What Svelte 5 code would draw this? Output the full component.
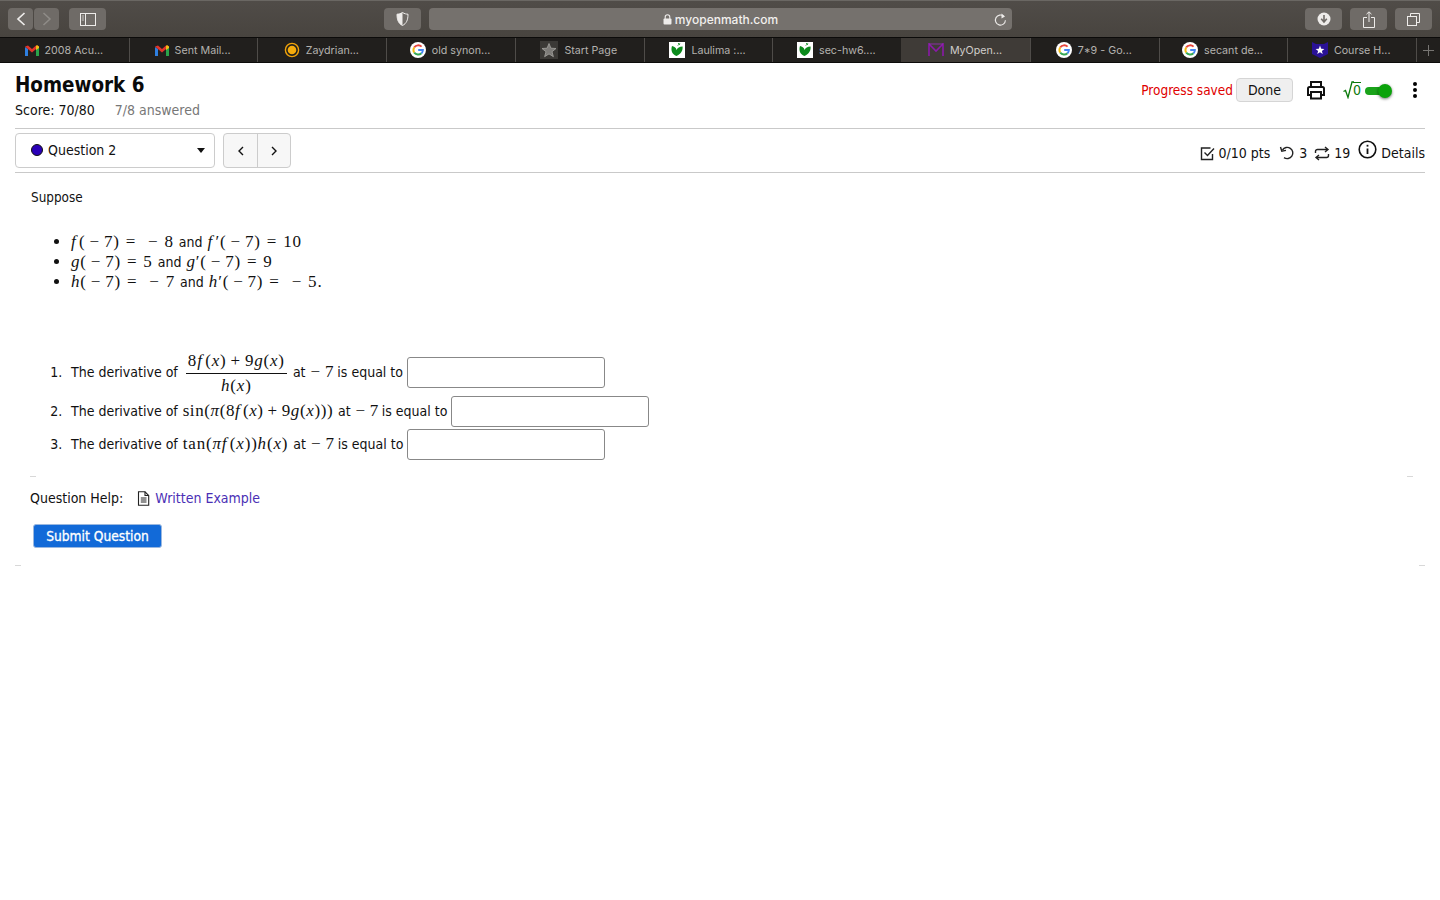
<script>
  const tabs = [
    { label: '2008 Acu...', icon: 'gmail' },
    { label: 'Sent Mail...', icon: 'gmail' },
    { label: 'Zaydrian...', icon: 'ring' },
    { label: 'old synon...', icon: 'google' },
    { label: 'Start Page', icon: 'star' },
    { label: 'Laulima :...', icon: 'leaf' },
    { label: 'sec-hw6....', icon: 'leaf' },
    { label: 'MyOpen...', icon: 'mom', active: true },
    { label: '7*9 - Go...', icon: 'google' },
    { label: 'secant de...', icon: 'google' },
    { label: 'Course H...', icon: 'shield' }
  ];
</script>

<div class="toolbar">
  <div class="group">
    <div class="tool-pair">
      <button class="tool nav" aria-label="Back">
        <svg width="12" height="16" viewBox="0 0 12 16"><path d="M9.5 2 L3 8 L9.5 14" fill="none" stroke="#eeecea" stroke-width="1.7"/></svg>
      </button>
      <button class="tool nav" aria-label="Forward">
        <svg width="12" height="16" viewBox="0 0 12 16"><path d="M2.5 2 L9 8 L2.5 14" fill="none" stroke="#8f8c88" stroke-width="1.5"/></svg>
      </button>
    </div>
    <button class="tool wide" aria-label="Sidebar">
      <svg width="16" height="13" viewBox="0 0 16 13"><rect x="0.5" y="0.5" width="15" height="12" fill="none" stroke="#eeecea"/><path d="M5.5 0.5 V12.5" stroke="#eeecea"/><path d="M1.8 3 H4 M1.8 5 H4 M1.8 7 H4" stroke="#c8c6c3"/></svg>
    </button>
  </div>

  <div class="center">
    <button class="tool shield-btn" aria-label="Privacy">
      <svg width="13" height="14" viewBox="0 0 13 14"><path d="M6.5 0.5 C8.5 1.8 10.5 2.2 12 2.2 C12 8 10.5 11.5 6.5 13.5 C2.5 11.5 1 8 1 2.2 C2.5 2.2 4.5 1.8 6.5 0.5 Z" fill="none" stroke="#eeecea"/><path d="M6.5 0.5 C4.5 1.8 2.5 2.2 1 2.2 C1 8 2.5 11.5 6.5 13.5 Z" fill="#eeecea"/></svg>
    </button>
    <div class="address">
      <span class="url">
        <svg width="9" height="11" viewBox="0 0 9 11"><rect x="0.5" y="4.5" width="8" height="6" rx="1" fill="#eeecea"/><path d="M2.2 5 V3 a2.3 2.3 0 0 1 4.6 0 V5" fill="none" stroke="#eeecea" stroke-width="1.1"/></svg>
        myopenmath.com
      </span>
      <svg class="reload" width="13" height="14" viewBox="0 0 13 14"><path d="M9.8 3.4 A5 5 0 1 0 11.4 7.2" fill="none" stroke="#eeecea" stroke-width="1.1"/><path d="M7.5 0.5 L11 3.4 L7.5 5.6 Z" fill="#eeecea"/></svg>
    </div>
  </div>

  <div class="group">
    <button class="tool wide" aria-label="Downloads">
      <svg width="14" height="14" viewBox="0 0 14 14"><circle cx="7" cy="7" r="6.5" fill="#eeecea"/><path d="M7 3 V9 M4.2 6.8 L7 10 L9.8 6.8" fill="none" stroke="#6f6b67" stroke-width="1.6"/></svg>
    </button>
    <button class="tool wide" aria-label="Share">
      <svg width="12" height="17" viewBox="0 0 12 17"><path d="M4 6.5 H0.5 V16.5 H11.5 V6.5 H8" fill="none" stroke="#eeecea"/><path d="M6 11 V1 M3.5 3.2 L6 0.8 L8.5 3.2" fill="none" stroke="#eeecea"/></svg>
    </button>
    <button class="tool wide" aria-label="Tabs">
      <svg width="13" height="13" viewBox="0 0 13 13"><rect x="0.5" y="3.5" width="9" height="9" fill="none" stroke="#eeecea"/><path d="M3.5 3.5 V0.5 H12.5 V9.5 H9.5" fill="none" stroke="#eeecea"/></svg>
    </button>
  </div>
</div>

<div class="tabbar">
  {#each tabs as tab}
    <div class="tab" class:active={tab.active}>
      {#if tab.icon === 'gmail'}
        <svg width="14" height="11" viewBox="0 0 14 11"><path d="M0 2 V11 H3 V4 Z" fill="#2f7fe0"/><path d="M11 4 V11 H14 V2 Z" fill="#2aa44a"/><path d="M0 1.5 L3 0.5 L7 4 L11 0.5 L14 1.5 L7 7.5 Z" fill="#e0352b"/><path d="M12 0 L14 1.5 V3 L11 5 V1 Z" fill="#f5bc15"/></svg>
      {:else if tab.icon === 'ring'}
        <svg width="16" height="16" viewBox="0 0 16 16"><circle cx="8" cy="8" r="6.6" fill="none" stroke="#f0a30a" stroke-width="1.4"/><circle cx="8" cy="8" r="4.3" fill="#f5ab0c"/></svg>
      {:else if tab.icon === 'google'}
        <svg width="16" height="16" viewBox="0 0 16 16"><circle cx="8" cy="8" r="8" fill="#fff"/><path d="M11.6 4.6 A5 5 0 0 0 4.2 5.4" fill="none" stroke="#e8453c" stroke-width="1.9"/><path d="M4.2 5.4 A5 5 0 0 0 4.2 10.6" fill="none" stroke="#f5bb12" stroke-width="1.9"/><path d="M4.2 10.6 A5 5 0 0 0 11.5 11.3" fill="none" stroke="#34a853" stroke-width="1.9"/><path d="M11.5 11.3 A5 5 0 0 0 12.9 8 H8.2" fill="none" stroke="#4285f4" stroke-width="1.9"/></svg>
      {:else if tab.icon === 'star'}
        <span class="star-box">
          <svg width="16" height="16" viewBox="0 0 16 16"><path d="M8 1.5 L9.9 6.2 L15 6.5 L11 9.7 L12.4 14.7 L8 11.9 L3.6 14.7 L5 9.7 L1 6.5 L6.1 6.2 Z" fill="#7d7b78" stroke="#a5a3a0" stroke-width="0.8"/></svg>
        </span>
      {:else if tab.icon === 'leaf'}
        <svg width="16" height="16" viewBox="0 0 16 16"><rect width="16" height="16" fill="#fff"/><path d="M7.4 14 C3 12.5 1.6 8 3 4 C5 4.4 7 5.4 7.6 8 C8.4 5.6 10.5 4.4 13.6 4.4 C14 8.4 12 12 7.4 14 Z" fill="#0c8a1c"/><path d="M9 1 L11 3 M11 1.2 L8.8 3.6" stroke="#3aa04a"/></svg>
      {:else if tab.icon === 'mom'}
        <svg width="16" height="14" viewBox="0 0 16 14"><path d="M1 13 V1 L8 8 L15 1 V13" fill="none" stroke="#8a1aa8" stroke-width="1.6"/><path d="M1 1 H15" stroke="#a02cc4" stroke-width="0.8"/></svg>
      {:else if tab.icon === 'shield'}
        <svg width="16" height="16" viewBox="0 0 16 16"><path d="M0 0 L4 2 H12 L16 0 V12 L8 16 L0 12 Z" fill="#2a1296"/><path d="M8 3.6 L9.2 6.8 L12.4 6.9 L9.9 9 L10.7 12.1 L8 10.3 L5.3 12.1 L6.1 9 L3.6 6.9 L6.8 6.8 Z" fill="#fff"/></svg>
      {/if}
      <span>{tab.label}</span>
    </div>
  {/each}
  <div class="new-tab">
    <svg width="11" height="11" viewBox="0 0 11 11"><path d="M5.5 0 V11 M0 5.5 H11" stroke="#777572"/></svg>
  </div>
</div>

<main class="page">
  <header class="head">
    <div>
      <h1>Homework 6</h1>
      <p class="score">Score: 70/80 <span class="answered">7/8 answered</span></p>
    </div>
    <div class="head-actions">
      <span class="saved">Progress saved</span>
      <button class="done">Done</button>
      <svg class="print" width="20" height="20" viewBox="0 0 20 20" fill="none" stroke="#111" stroke-width="2"><path d="M5 7 V2 H15 V7"/><path d="M5 15 H2 V8.5 A1.5 1.5 0 0 1 3.5 7 H16.5 A1.5 1.5 0 0 1 18 8.5 V15 H15"/><rect x="5" y="12" width="10" height="6.5"/></svg>
      <span class="mathtoggle">
        <span class="sqrt"><svg width="11" height="18" viewBox="0 0 11 18"><path d="M0.5 10.5 L2.5 9.5 L5 16.5 L9 1 H11" fill="none" stroke="#0b7a0b" stroke-width="1.3"/></svg><span>0</span></span>
        <span class="switch"><span class="knob"></span></span>
      </span>
      <svg class="kebab" width="4" height="16" viewBox="0 0 4 16"><circle cx="2" cy="2" r="2"/><circle cx="2" cy="8" r="2"/><circle cx="2" cy="14" r="2"/></svg>
    </div>
  </header>

  <div class="controls">
    <div class="left-controls">
      <div class="select">
        <span class="dot"></span>
        <span class="select-label">Question 2</span>
        <span class="caret"></span>
      </div>
      <div class="pager">
        <button aria-label="Previous"><svg width="8" height="10" viewBox="0 0 8 10"><path d="M6 1 L2 5 L6 9" fill="none" stroke="#111" stroke-width="1.4"/></svg></button>
        <button aria-label="Next"><svg width="8" height="10" viewBox="0 0 8 10"><path d="M2 1 L6 5 L2 9" fill="none" stroke="#111" stroke-width="1.4"/></svg></button>
      </div>
    </div>
    <div class="meta">
      <span class="meta-item pts">
        <svg width="15" height="15" viewBox="0 0 15 15" fill="none" stroke="#222" stroke-width="1.4"><path d="M12.5 8 V13.5 H1.5 V2 H10.5"/><path d="M4.5 6.5 L7.5 9.5 L14 2.5"/></svg>
        0/10 pts
      </span>
      <span class="meta-item">
        <svg width="16" height="14" viewBox="0 0 16 14" fill="none" stroke="#222" stroke-width="1.4"><path d="M3.5 4 A5.6 5.6 0 1 1 5 11.6"/><path d="M1.5 1 L2.8 5.2 L7 4.4"/></svg>
        3
      </span>
      <span class="meta-item">
        <svg width="16" height="15" viewBox="0 0 16 15" fill="none" stroke="#222" stroke-width="1.4"><path d="M1.5 7 V5.5 A2 2 0 0 1 3.5 3.5 H14 M11 1 L14 3.5 L11 6"/><path d="M14.5 8 V9.5 A2 2 0 0 1 12.5 11.5 H2 M5 9 L2 11.5 L5 14"/></svg>
        19
      </span>
      <span class="meta-item details">
        <svg class="info" width="19" height="19" viewBox="0 0 19 19" fill="none" stroke="#111" stroke-width="1.6"><circle cx="9.5" cy="9.5" r="8.3"/><path d="M9.5 8.5 V14" stroke-width="1.8"/><path d="M9.5 4.8 V6.6" stroke-width="1.8"/></svg>
        Details
      </span>
    </div>
  </div>

  <section class="question">
    <p class="suppose">Suppose</p>
    <ul class="facts">
      <li><i class="f">f</i>(<span class="n">−</span>7)<span class="eq">=</span><span class="neg">−</span>8 <span class="t">and</span> <i class="f">f</i>′(<span class="n">−</span>7)<span class="eq">=</span>10</li>
      <li><i>g</i>(<span class="n">−</span>7)<span class="eq">=</span>5 <span class="t">and</span> <i>g</i>′(<span class="n">−</span>7)<span class="eq">=</span>9</li>
      <li><i>h</i>(<span class="n">−</span>7)<span class="eq">=</span><span class="neg">−</span>7 <span class="t">and</span> <i>h</i>′(<span class="n">−</span>7)<span class="eq">=</span><span class="neg">−</span>5.</li>
    </ul>

    <ol class="parts">
      <li class="part-one">
        <span class="t">The derivative of</span>
        <span class="frac">
          <span class="num">8<i class="f">f</i>(<i>x</i>)<span class="plus">+</span>9<i>g</i>(<i>x</i>)</span>
          <span class="den"><i>h</i>(<i>x</i>)</span>
        </span>
        <span class="t">at</span> <span class="un">−</span>7 <span class="t is">is equal to</span>
        <input type="text" />
      </li>
      <li class="part-two">
        <span class="t">The derivative of</span> sin(<i>π</i>(8<i class="f">f</i>(<i>x</i>)<span class="plus">+</span>9<i>g</i>(<i>x</i>))) <span class="t">at</span> <span class="un">−</span>7 <span class="t is">is equal to</span>
        <input type="text" />
      </li>
      <li class="part-three">
        <span class="t">The derivative of</span> tan(<i>π</i><i class="f">f</i>(<i>x</i>))<i>h</i>(<i>x</i>) <span class="t">at</span> <span class="un">−</span>7 <span class="t is">is equal to</span>
        <input type="text" />
      </li>
    </ol>

    <div class="corners"><span></span><span></span></div>

    <div class="help">
      <span>Question Help:</span>
      <svg width="13" height="15" viewBox="0 0 13 15" fill="none" stroke="#222" stroke-width="1.1"><path d="M1.5 0.8 H8 L11.7 4.5 V14.2 H1.5 Z"/><path d="M8 0.8 V4.5 H11.7"/><path d="M3.8 7 H9.5 M3.8 9 H9.5 M3.8 11 H9.5"/></svg>
      <a href="#example">Written Example</a>
    </div>

    <button class="submit">Submit Question</button>
  </section>

  <div class="corners outer"><span></span><span></span></div>
</main>

<style>
  :global(body) {
    margin: 0;
    background: #fff;
    font-family: "DejaVu Sans Condensed", "DejaVu Sans", sans-serif;
    font-stretch: condensed;
    color: #111;
  }

  button {
    font-family: inherit;
    padding: 0;
    cursor: pointer;
  }

  /* Browser chrome */
  .toolbar {
    height: 38px;
    box-sizing: border-box;
    padding: 0 8px;
    display: flex;
    align-items: center;
    justify-content: space-between;
    position: relative;
    background: linear-gradient(#504c48, #48443f);
    border-top: 1px solid #6a6763;
    border-bottom: 1px solid #0c0b0a;
  }

  .group {
    display: flex;
    gap: 8px;
  }

  .tool-pair {
    display: flex;
    gap: 1px;
    margin-right: 2px;
  }

  .tool {
    height: 22px;
    border: 0;
    border-radius: 4px;
    background: #6f6b67;
    display: flex;
    align-items: center;
    justify-content: center;
  }

  .nav { width: 25px; }
  .wide { width: 37px; }

  .center {
    position: absolute;
    left: 384px;
    top: 7px;
    display: flex;
    gap: 8px;
  }

  .shield-btn { width: 37px; }

  .address {
    width: 583px;
    height: 22px;
    border-radius: 4px;
    background: #75716d;
    display: flex;
    align-items: center;
    justify-content: center;
    position: relative;
  }

  .url {
    font-family: Inter, "Liberation Sans", sans-serif;
    font-stretch: normal;
    font-size: 12px;
    font-weight: 500;
    color: #f2f0ee;
    display: flex;
    align-items: center;
    gap: 3px;
  }

  .reload {
    position: absolute;
    right: 5px;
    top: 5px;
  }

  .tabbar {
    height: 25px;
    display: flex;
    background: #211f1d;
    border-bottom: 1px solid #0c0b0a;
    box-sizing: border-box;
  }

  .tab {
    flex: 1 1 0;
    min-width: 0;
    box-sizing: border-box;
    padding-right: 2px;
    display: flex;
    align-items: center;
    justify-content: center;
    gap: 6px;
    border-left: 1px solid #4f4c49;
    font-family: Inter, "Liberation Sans", sans-serif;
    font-stretch: normal;
    font-size: 10.7px;
    color: #b4b2af;
  }

  .tab:first-child {
    border-left-color: transparent;
  }

  .tab.active {
    background: #3f3b37;
    color: #cfcdca;
    border-left-color: #3f3b37;
  }

  .star-box {
    width: 18px;
    height: 18px;
    background: #3b3936;
    display: flex;
    align-items: center;
    justify-content: center;
  }

  .new-tab {
    width: 24px;
    box-sizing: border-box;
    flex-shrink: 0;
    display: flex;
    align-items: center;
    justify-content: center;
    border-left: 1px solid #4f4c49;
  }

  /* Page */
  .page {
    padding: 0 15px;
  }

  .head {
    display: flex;
    justify-content: space-between;
    align-items: flex-start;
    height: 66px;
    box-sizing: border-box;
    border-bottom: 1px solid #c9c9c9;
  }

  h1 {
    margin: 9px 0 0;
    font-size: 20.4px;
    line-height: 26px;
    font-weight: 700;
    color: #0a0a0a;
  }

  .score {
    margin: 3px 0 0;
    font-size: 14px;
    line-height: 18px;
  }

  .answered {
    color: #777;
    margin-left: 16px;
  }

  .head-actions {
    display: flex;
    align-items: center;
    margin-top: 14px;
    height: 25px;
  }

  .saved {
    color: #e00000;
    font-size: 13.5px;
    margin-right: 3px;
  }

  .done {
    width: 57px;
    height: 24px;
    border: 1px solid #d5d5d5;
    border-radius: 4px;
    background: #efefef;
    font-size: 14px;
    color: #111;
  }

  .print {
    margin-left: 13px;
  }

  .mathtoggle {
    display: flex;
    align-items: center;
    margin-left: 17px;
  }

  .sqrt {
    display: flex;
    align-items: center;
    color: #0b7a0b;
    font-size: 14px;
  }

  .sqrt span {
    border-top: 1px solid #0b7a0b;
    line-height: 15px;
    margin-left: -1px;
  }

  .switch {
    width: 26px;
    height: 8px;
    margin: 3px 0 0 4px;
    border-radius: 4px;
    background: #1aa31a;
    position: relative;
  }

  .knob {
    position: absolute;
    right: -1px;
    top: -3px;
    width: 14px;
    height: 14px;
    border-radius: 50%;
    background: #0ba30b;
    box-shadow: 0 1px 3px rgba(0, 0, 0, 0.55);
  }

  .kebab {
    margin-left: 22px;
    margin-right: 8px;
  }

  .controls {
    height: 44px;
    box-sizing: border-box;
    border-bottom: 1px solid #c9c9c9;
    display: flex;
    justify-content: space-between;
    padding-top: 4px;
  }

  .left-controls {
    display: flex;
    gap: 8px;
  }

  .select {
    width: 200px;
    height: 35px;
    box-sizing: border-box;
    border: 1px solid #ccc;
    border-radius: 4px;
    display: flex;
    align-items: center;
    padding: 0 9px 1px 15px;
    font-size: 14px;
  }

  .dot {
    width: 12px;
    height: 12px;
    border-radius: 50%;
    background: #2a00b8;
    border: 1px solid #111;
    box-sizing: border-box;
    margin-right: 5px;
  }

  .select-label {
    flex: 1;
  }

  .caret {
    width: 0;
    height: 0;
    border: 4px solid transparent;
    border-top: 5px solid #111;
    border-bottom: 0;
  }

  .pager {
    display: flex;
    height: 35px;
    box-sizing: border-box;
    border: 1px solid #ccc;
    border-radius: 4px;
    background: #f7f7f7;
    overflow: hidden;
  }

  .pager button {
    width: 33px;
    border: 0;
    background: transparent;
    display: flex;
    align-items: center;
    justify-content: center;
  }

  .pager button + button {
    border-left: 1px solid #ccc;
  }

  .meta {
    display: flex;
    align-items: flex-start;
    gap: 7px;
    font-size: 14px;
    padding-top: 11px;
  }

  .meta-item {
    display: flex;
    align-items: center;
    gap: 4px;
    height: 18px;
  }

  .pts {
    margin-right: 2px;
  }

  .details {
    margin-left: 1px;
  }

  .info {
    margin-top: -7px;
  }

  /* Question */
  .question {
    padding-top: 1px;
    font-family: "Liberation Serif", "Times New Roman", serif;
    font-stretch: normal;
    font-size: 17px;
    letter-spacing: 0.8px;
  }

  .t, .suppose, .help, .submit {
    font-family: "DejaVu Sans Condensed", "DejaVu Sans", sans-serif;
    font-stretch: condensed;
    font-size: 14px;
    letter-spacing: 0;
  }

  .f {
    padding-right: 2.5px;
  }

  .n {
    margin: 0 4px;
  }

  .eq {
    margin: 0 6px;
  }

  .neg {
    margin: 0 6px;
  }

  .un {
    margin-right: 4px;
  }

  .is {
    margin-left: -2px;
  }

  .plus {
    margin: 0 4px;
  }

  .suppose {
    margin: 14px 0 0 16px;
    line-height: 20px;
    font-size: 13.4px;
  }

  .facts {
    margin: 24px 0 0;
    padding: 0 0 0 56px;
    line-height: 20px;
  }

  .parts {
    margin: 59px 0 0;
    padding: 0 0 0 56px;
  }

  .parts li::marker {
    content: counter(list-item) ".\2002\2009";
    font-family: "DejaVu Sans Condensed", "DejaVu Sans", sans-serif;
    font-size: 14px;
    letter-spacing: 0;
  }

  .parts li {
    white-space: nowrap;
    line-height: 31px;
  }

  .part-one { height: 44px; }
  .part-two { height: 33px; letter-spacing: 0.6px; }
  .part-three { height: 31px; }

  .frac {
    display: inline-flex;
    flex-direction: column;
    align-items: center;
    vertical-align: middle;
    margin: 0 1px 0 3px;
    line-height: 20px;
  }

  .num {
    padding: 0 2px 2px;
    border-bottom: 1px solid #111;
  }

  .den {
    padding-top: 2px;
  }

  input {
    width: 198px;
    height: 31px;
    box-sizing: border-box;
    border: 1px solid #888;
    border-radius: 3px;
    background: #fff;
    vertical-align: baseline;
    margin-left: -1px;
    padding: 0;
  }

  .corners {
    display: flex;
    justify-content: space-between;
    padding: 0 12px 0 15px;
    margin-top: 17px;
    height: 1px;
  }

  .corners span {
    width: 6px;
    height: 1px;
    background: #d8d8d8;
  }

  .corners.outer {
    padding: 0;
    margin-top: 17px;
  }

  .help {
    display: flex;
    align-items: center;
    margin: 11px 0 0 15px;
    height: 20px;
  }

  .help svg {
    margin-left: 14px;
    margin-right: 5px;
  }

  .help a {
    color: #4a2fb5;
    text-decoration: none;
  }

  .submit {
    display: block;
    margin: 16px 0 0 18px;
    width: 129px;
    height: 24px;
    border: 1px solid #9ab8e0;
    border-radius: 3px;
    background: #126ad8;
    color: #fff;
    font-size: 13.7px;
    font-weight: 400;
    -webkit-text-stroke: 0.3px #fff;
  }
</style>
